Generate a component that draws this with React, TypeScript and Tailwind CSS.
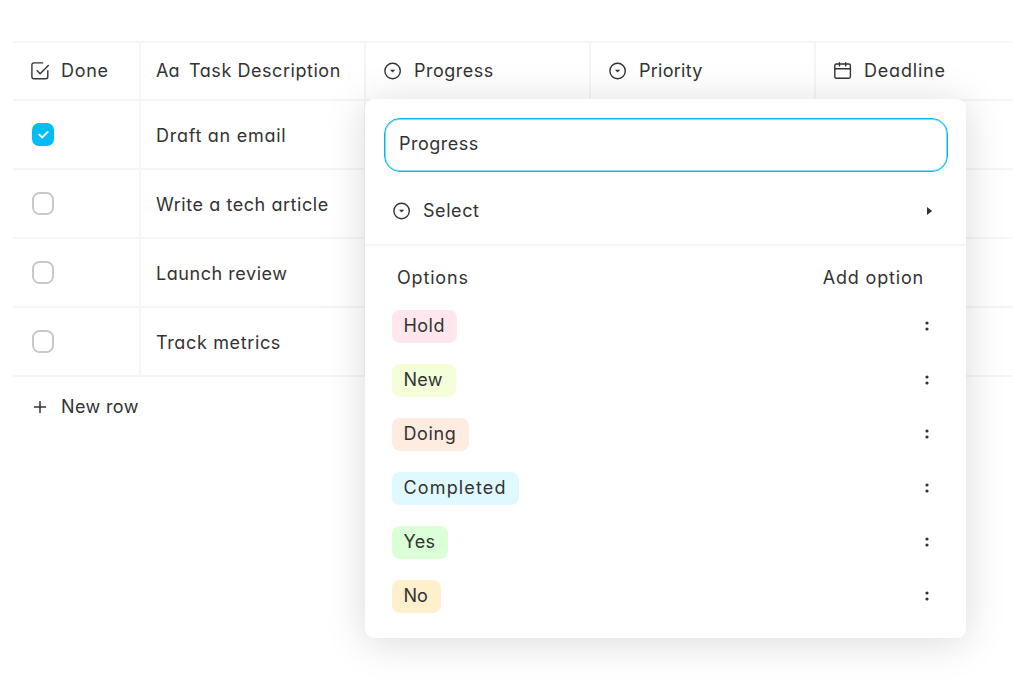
import type { ReactNode } from "react";

function CheckSquareIcon() {
  return (
    <svg width="20" height="20" viewBox="0 0 20 20" fill="none" stroke="#333" strokeWidth="1.4" strokeLinecap="round" strokeLinejoin="round">
      <path d="M12.6 1.9H3.9a2 2 0 0 0-2 2v11.9a2 2 0 0 0 2 2h11.9a2 2 0 0 0 2-2V9.8" />
      <path d="M7.2 9.8l2.9 2.9 8.2-8.2" />
    </svg>
  );
}

function SelectIcon() {
  return (
    <svg width="18" height="18" viewBox="0 0 18 18" fill="none">
      <circle cx="8.6" cy="9" r="7.7" stroke="#333" strokeWidth="1.4" />
      <path d="M6.5 7.9h4.2L8.6 10.2z" fill="#333" stroke="#333" strokeWidth=".5" strokeLinejoin="round" />
    </svg>
  );
}

function CalendarIcon() {
  return (
    <svg width="18" height="18" viewBox="0 0 18 18" fill="none" stroke="#333" strokeWidth="1.4" strokeLinecap="round">
      <rect x=".8" y="2" width="15.6" height="14.2" rx="1.6" />
      <path d="M.8 6.7h15.6M5.5 .7v3.2M11.7 .7v3.2" />
    </svg>
  );
}

function Header({ icon, label, className }: { icon: ReactNode; label: string; className: string }) {
  return (
    <div className="flex items-center border-l-2 border-[#f5f5f5] pl-[18px]">
      {icon}
      <span className={className}>{label}</span>
    </div>
  );
}

const rows = [
  { text: "Draft an email", done: true, tracking: "tracking-[0.73px]" },
  { text: "Write a tech article", done: false, tracking: "tracking-[0.56px]" },
  { text: "Launch review", done: false, tracking: "tracking-[0.55px]" },
  { text: "Track metrics", done: false, tracking: "tracking-[0.64px]" },
];

const options = [
  { text: "Hold", box: "w-[65px] bg-[#ffe7ed]", tracking: "tracking-[0.45px]" },
  { text: "New", box: "w-[64px] bg-[#f4ffda]", tracking: "tracking-[0.2px]" },
  { text: "Doing", box: "w-[77px] bg-[#ffece1]", tracking: "tracking-[0.6px]" },
  { text: "Completed", box: "w-[127px] bg-[#e0f9ff]", tracking: "tracking-[1.15px]" },
  { text: "Yes", box: "w-[56px] bg-[#dbffd7]", tracking: "tracking-[0.3px]" },
  { text: "No", box: "w-[49px] bg-[#fff0cd]", tracking: "tracking-[0px]" },
];

const columns = "grid grid-cols-[126px_225px_225px_225px_1fr]";

export default function App() {
  return (
    <main className="relative h-[683px] w-[1013px] overflow-hidden bg-white pt-[41px] pl-[13px] font-['Inter',sans-serif] text-[18px] leading-6 whitespace-nowrap text-[#333] [font-feature-settings:'cv11']">
      <div className={`${columns} h-[58px] border-t-2 border-[#f5f5f5]`}>
        <div className="flex items-center pl-[17px]">
          <CheckSquareIcon />
          <span className="ml-[11px] tracking-[0.73px]">Done</span>
        </div>
        <div className="flex items-center border-l-2 border-[#f5f5f5] pl-[15px]">
          <span className="w-[33px]">Aa</span>
          <span className="tracking-[0.55px]">Task Description</span>
        </div>
        <Header icon={<SelectIcon />} label="Progress" className="ml-[12px] tracking-[0.5px]" />
        <Header icon={<SelectIcon />} label="Priority" className="ml-[12px] tracking-[0.27px]" />
        <Header icon={<CalendarIcon />} label="Deadline" className="ml-[12px] tracking-[0.8px]" />
      </div>
      {rows.map((row) => (
        <div key={row.text} className={`${columns} h-[69px] border-t-2 border-[#f5f5f5]`}>
          <div className="flex items-center pl-[19px]">
            {row.done ? (
              <span className="flex h-[23px] w-[22px] items-center justify-center rounded-[7px] bg-[#00bdf5]">
                <svg width="13" height="11" viewBox="0 0 13 11" fill="none" stroke="#fff" strokeWidth="1.8" strokeLinecap="round" strokeLinejoin="round">
                  <path d="M2.2 5.5l3 3 5.6-5.6" />
                </svg>
              </span>
            ) : (
              <span className="h-[23px] w-[22px] rounded-[7.5px] border-2 border-[#c8c8c8]" />
            )}
          </div>
          <div className="flex items-center border-l-2 border-[#f5f5f5] pt-[2px] pl-[15px]">
            <span className={row.tracking}>{row.text}</span>
          </div>
          <div className="border-l-2 border-[#f5f5f5]" />
          <div />
          <div />
        </div>
      ))}
      <div className="flex h-[62px] items-center border-t-2 border-[#f5f5f5] pl-[20px]">
        <svg width="14" height="14" viewBox="0 0 14 14" stroke="#333" strokeWidth="1.5">
          <path d="M7 1v12M1 7h12" />
        </svg>
        <span className="ml-[14px] tracking-[0.37px]">New row</span>
      </div>

      <section className="absolute top-[99px] left-[365px] flex h-[539px] w-[601px] flex-col rounded-[9px] bg-white shadow-[0_4px_40px_rgba(0,0,0,0.15)]">
        <div className="mt-[19px] mr-[18px] ml-[19px] flex h-[54px] items-center rounded-[16px] border border-[#00b8ee] pb-[2px] pl-[14px] shadow-[inset_0_0_0_1px_#80dbf7]">
          <span className="tracking-[0.5px]">Progress</span>
        </div>
        <div className="flex h-[74px] items-center border-b-2 border-[#f5f5f5] pt-[6px] pr-[33px] pl-[28px]">
          <SelectIcon />
          <span className="ml-[12px] flex-1 tracking-[0.57px]">Select</span>
          <svg width="6" height="8" viewBox="0 0 6 8"><path d="M0 0l5.2 4L0 8z" fill="#333" /></svg>
        </div>
        <div className="flex h-[53px] items-center justify-between pt-[11px] pr-[42px] pl-[32px]">
          <span className="tracking-[0.82px]">Options</span>
          <span className="tracking-[0.83px]">Add option</span>
        </div>
        {options.map((option) => (
          <div key={option.text} className="flex h-[54px] items-center justify-between pr-[37px] pl-[27px]">
            <span className={`flex h-[33px] items-center rounded-[8px] pl-[11.5px] ${option.box}`}>
              <span className={option.tracking}>{option.text}</span>
            </span>
            <svg width="4" height="10" viewBox="0 0 4 10" fill="#333">
              <circle cx="2" cy="2" r="1.6" />
              <circle cx="2" cy="8" r="1.6" />
            </svg>
          </div>
        ))}
      </section>
    </main>
  );
}
